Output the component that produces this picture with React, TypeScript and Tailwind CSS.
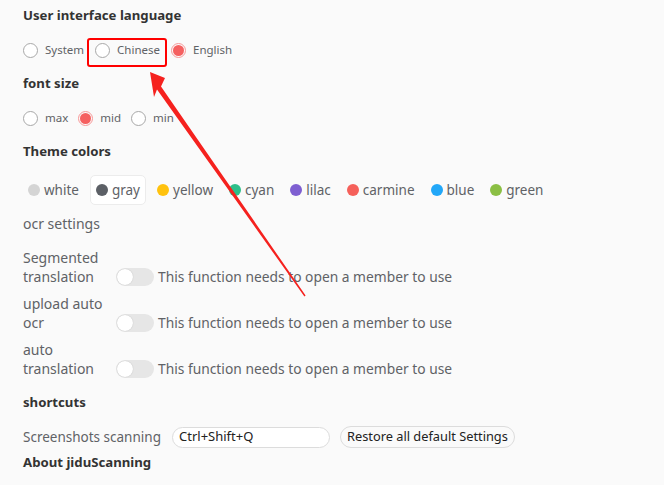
import { useState } from 'react';

const font = { fontFamily: '"Noto Sans", "Open Sans", sans-serif' };

function Radio({ label, checked }: { label: string; checked?: boolean }) {
  return (
    <label className="flex items-center gap-[7px] text-[11.5px] text-[#606266]">
      <span
        className={
          checked
            ? 'w-[15px] h-[15px] rounded-full border border-[#f89898] flex items-center justify-center'
            : 'w-[15px] h-[15px] rounded-full border border-[#a8a8a8] bg-white'
        }
      >
        {checked && <span className="w-[11px] h-[11px] rounded-full bg-[#f56060]" />}
      </span>
      {label}
    </label>
  );
}

const themes = [
  { name: 'white', color: '#d4d4d4' },
  { name: 'gray', color: '#5c6066' },
  { name: 'yellow', color: '#ffc20e' },
  { name: 'cyan', color: '#2dbf8a' },
  { name: 'lilac', color: '#7e5fd1' },
  { name: 'carmine', color: '#f5605a' },
  { name: 'blue', color: '#22a7f8' },
  { name: 'green', color: '#8bbf44' },
];

function Toggle() {
  return (
    <span className="w-[38px] h-[18px] rounded-full bg-[#e6e6e6] flex items-center px-[1px] shrink-0">
      <span className="w-[16px] h-[16px] rounded-full bg-white shadow-[0_0_1px_rgba(0,0,0,0.25)]" />
    </span>
  );
}

function MemberRow({ l1, l2 }: { l1: string; l2: string }) {
  return (
    <div className="flex items-end leading-[19px] text-[14px] text-[#606266]">
      <div className="w-[93px]">
        <div>{l1}</div>
        <div>{l2}</div>
      </div>
      <div className="flex items-center gap-[4px] h-[19px]">
        <Toggle />
        <span className="text-[13.8px]">This function needs to open a member to use</span>
      </div>
    </div>
  );
}

export default function App() {
  const [theme] = useState('gray');
  return (
    <div className="relative w-[664px] h-[485px] bg-[#fafafa] overflow-hidden" style={font}>
      <div className="pl-[23px]">
        <div className="h-8 flex items-center text-[13.2px] font-bold text-[#333]">User interface language</div>
        <div className="mt-[2px] h-8 flex items-center">
          <div className="flex items-center gap-[11px]">
            <Radio label="System" />
            <Radio label="Chinese" />
            <Radio label="English" checked />
          </div>
        </div>
        <div className="h-9 flex items-center text-[13.2px] font-bold text-[#333]">font size</div>
        <div className="h-8 flex items-center gap-[10px]">
          <Radio label="max" />
          <Radio label="mid" checked />
          <Radio label="min" />
        </div>
        <div className="h-9 flex items-center text-[13.2px] font-bold text-[#333]">Theme colors</div>
        <div className="h-10 flex items-center">
          {themes.map((t) => (
            <div
              key={t.name}
              className={
                t.name === theme
                  ? 'flex items-center gap-[4px] h-[30px] px-[5px] mr-[6px] -my-px rounded-[5px] bg-white border border-[#ececec] text-[13.5px] text-[#606266]'
                  : 'flex items-center gap-[4px] h-[30px] px-[5px] mr-[6px] text-[13.5px] text-[#606266]'
              }
            >
              <span className="w-[12px] h-[12px] rounded-full" style={{ background: t.color }} />
              {t.name}
            </div>
          ))}
        </div>
        <div className="h-[26px] flex items-center text-[14px] text-[#606266]">ocr settings</div>
        <div className="mt-[12px] flex flex-col gap-[8px]">
          <MemberRow l1="Segmented" l2="translation" />
          <MemberRow l1="upload auto" l2="ocr" />
          <MemberRow l1="auto" l2="translation" />
        </div>
        <div className="mt-[9px] h-8 flex items-center text-[13.2px] font-bold text-[#333]">shortcuts</div>
        <div className="h-9 flex items-center text-[13.5px]">
          <span className="w-[149px] text-[#606266]">Screenshots scanning</span>
          <div className="w-[158px] h-[21px] rounded-full border border-[#dcdcdc] bg-white flex items-center px-[6px] text-[13px] text-[#222]">
            Ctrl+Shift+Q
          </div>
          <button className="ml-[10px] h-[22px] px-[6px] rounded-full border border-[#dcdcdc] bg-[#fafafa] text-[12.8px] text-[#222]">
            Restore all default Settings
          </button>
        </div>
        <div className="h-4 flex items-center text-[13.2px] font-bold text-[#333]">About jiduScanning</div>
      </div>

      <svg className="absolute inset-0 pointer-events-none" width="664" height="485">
        <rect x="88" y="39" width="78" height="27" rx="2" fill="none" stroke="#f00" strokeWidth="2" />
        <polygon
          fill="#f5211e"
          points="150,72 165,78 161,86.6 305.6,295.5 304.4,296.5 157,89.4 154,97"
        />
      </svg>
    </div>
  );
}
